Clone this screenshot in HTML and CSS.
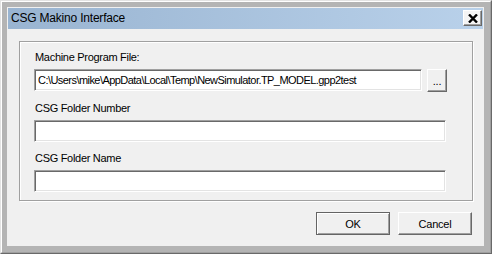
FILE: index.html
```html
<!DOCTYPE html>
<html lang="en">
<head>
    <meta charset="UTF-8">
    <title>CSG Makino Interface</title>
    <link rel="stylesheet" href="styles.css">
</head>
<body>
    <div class="window">
        <div class="frame">
            <div class="client">
                <div class="caption">
                    <span class="title">CSG Makino Interface</span>
                    <button class="close-btn" type="button">
                        <svg width="10" height="9" viewBox="0 0 10 9">
                            <path d="M1 0.5 L9 8.5 M9 0.5 L1 8.5" stroke="#000" stroke-width="2.4" fill="none"/>
                        </svg>
                    </button>
                </div>

                <div class="dialog-body">
                    <div class="group">
                        <label class="field-label first" for="program_file">Machine Program File:</label>
                        <div class="file-row">
                            <input class="text-input file-input" type="text" id="program_file" value="C:\Users\mike\AppData\Local\Temp\NewSimulator.TP_MODEL.gpp2test">
                            <button class="btn browse-btn" type="button">...</button>
                        </div>

                        <label class="field-label second" for="folder_number">CSG Folder Number</label>
                        <input class="text-input wide-input" type="text" id="folder_number">

                        <label class="field-label third" for="folder_name">CSG Folder Name</label>
                        <input class="text-input wide-input" type="text" id="folder_name">
                    </div>

                    <div class="actions">
                        <button class="btn action-btn default-btn" type="button">OK</button>
                        <button class="btn action-btn" type="button">Cancel</button>
                    </div>
                </div>
            </div>
        </div>
    </div>
</body>
</html>
```

FILE: styles.css
```css
* {
    box-sizing: border-box;
}

body {
    margin: 0;
    padding: 0;
    font-family: "Liberation Sans", Arial, sans-serif;
    font-size: 11px;
    color: #000;
    background-color: #f0f0f0;
}

/* Window frame (classic 3D edges) */
.window {
    width: 492px;
    height: 254px;
    border: 1px solid;
    border-color: #e3e3e3 #696969 #696969 #e3e3e3;
}

.frame {
    height: 100%;
    border: 1px solid;
    border-color: #fff #a0a0a0 #a0a0a0 #fff;
    background-color: #b4b4b4;
    padding: 5px 6px 6px 5px;
}

.client {
    height: 100%;
    background-color: #f0f0f0;
    padding: 1px 1px 0 1px;
    display: flex;
    flex-direction: column;
}

.caption {
    height: 21px;
    display: flex;
    align-items: flex-start;
    justify-content: space-between;
    background: linear-gradient(to right, #99b4d1, #b9d1ea);
}

.title {
    font-size: 12px;
    line-height: 21px;
    letter-spacing: -0.2px;
    padding-left: 3px;
}

.close-btn {
    width: 19px;
    height: 16px;
    margin-top: 2px;
    margin-right: 1px;
    padding: 0;
    border: 1px solid;
    border-color: #fff #696969 #696969 #fff;
    box-shadow: inset -1px -1px #a0a0a0;
    background-color: #f4f4f4;
    display: flex;
    align-items: center;
    justify-content: center;
}

.close-btn svg {
    display: block;
}

/* Dialog contents */
.dialog-body {
    padding: 12px 10px 0 11px;
}

.group {
    height: 160px;
    border: 1px solid #a0a0a0;
    box-shadow: inset 1px 1px #fff, 1px 1px #fff;
    padding: 0 0 0 14px;
    display: flex;
    flex-direction: column;
    align-items: flex-start;
}

.field-label {
    display: block;
    line-height: 13px;
    letter-spacing: -0.3px;
    padding-left: 1px;
}

.field-label.first {
    margin-top: 9px;
}

.field-label.second,
.field-label.third {
    margin-top: 10px;
}

.file-row,
.text-input {
    margin-top: 5px;
}

.file-row {
    display: flex;
    align-items: flex-start;
    gap: 5px;
}

.file-row .text-input {
    margin-top: 0;
}

.text-input {
    height: 22px;
    border: 1px solid;
    border-color: #a0a0a0 #fff #fff #a0a0a0;
    box-shadow: inset 1px 1px #696969, inset -1px -1px #e3e3e3;
    background-color: #fff;
    font-family: "Liberation Sans", Arial, sans-serif;
    font-size: 11px;
    letter-spacing: -0.55px;
    color: #000;
    padding: 0 2px 0 3px;
    outline: none;
}

.file-input {
    width: 388px;
}

.wide-input {
    width: 412px;
}

.btn {
    border: 1px solid;
    border-color: #fff #696969 #696969 #fff;
    box-shadow: inset -1px -1px #a0a0a0;
    background-color: #f0f0f0;
    font-family: "Liberation Sans", Arial, sans-serif;
    font-size: 11px;
    letter-spacing: -0.2px;
    color: #000;
    padding: 0;
}

.browse-btn {
    width: 20px;
    height: 23px;
}

.actions {
    margin-top: 11px;
    padding-right: 1px;
    display: flex;
    justify-content: flex-end;
    gap: 8px;
}

.action-btn {
    width: 74px;
    height: 23px;
}

.default-btn {
    border-color: #646464;
    box-shadow: inset 1px 1px #fff, inset -1px -1px #a0a0a0;
}
```
